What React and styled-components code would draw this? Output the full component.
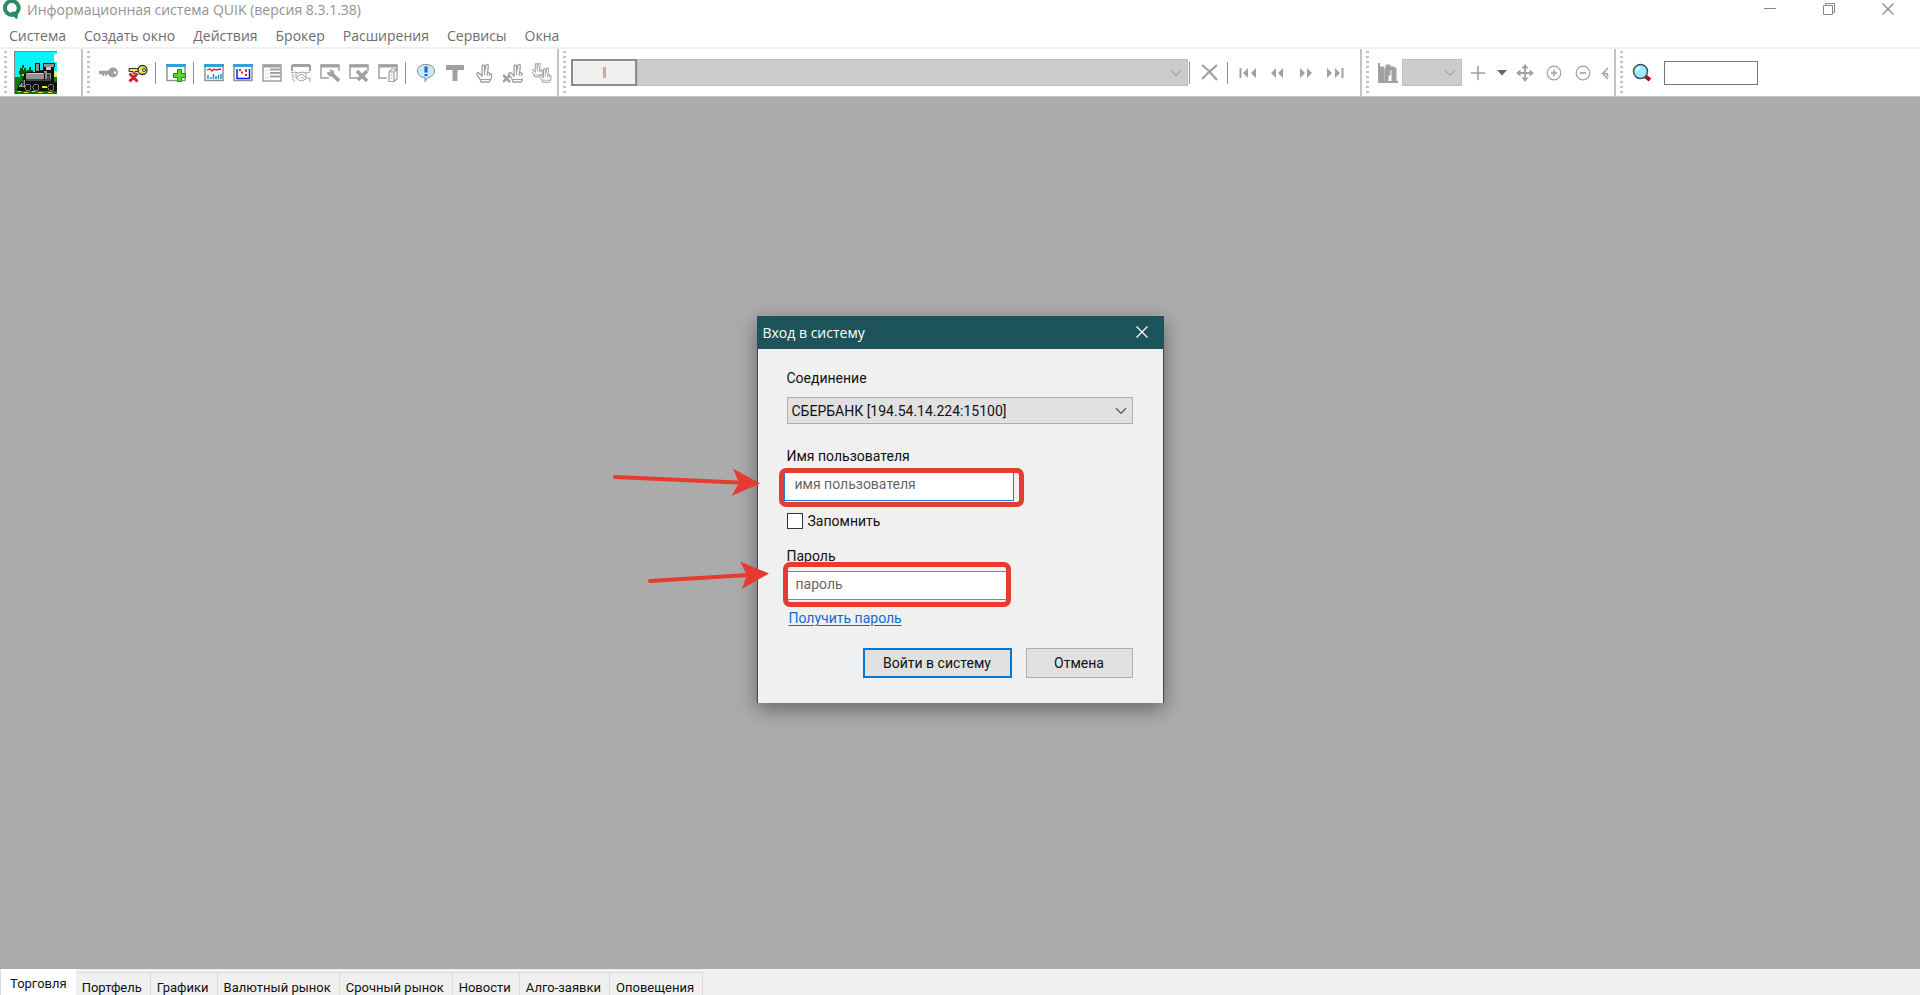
import styled, { createGlobalStyle } from 'styled-components';

const GlobalStyle = createGlobalStyle`
  * {
    box-sizing: border-box;
  }

  body {
    margin: 0;
    overflow: hidden;
    font-family: Roboto, 'Liberation Sans', sans-serif;
    font-size: 14px;
    color: #111;
  }

  button, input, select {
    font: inherit;
    color: inherit;
    margin: 0;
    border-radius: 0;
  }
`;

const StyledApp = styled.div`
  min-height: 100vh;
  display: flex;
  flex-direction: column;
  background: #fff;
`;

const StyledTitleBar = styled.header`
  height: 22px;
  padding: 0 3px 0 2px;
  display: flex;
  align-items: flex-start;
  font-family: 'Open Sans', 'Noto Sans', sans-serif;
  color: #929292;

  h1 {
    flex: 1;
    margin: 0 0 0 6px;
    font-size: 14px;
    font-weight: 400;
    line-height: 20px;
  }
`;

const StyledWindowButton = styled.button`
  width: 59px;
  height: 18px;
  padding: 0;
  border: 0;
  background: none;
  color: ${(props) => props.$color || '#868686'};
  display: flex;
  align-items: center;
  justify-content: center;
`;

const StyledMenu = styled.nav`
  height: 27px;
  padding: 4px 9px 0;
  display: flex;
  gap: 18px;
  border-bottom: 2px solid #f0f0f0;
  font-family: 'Open Sans', 'Noto Sans', sans-serif;
  font-size: 14px;
  line-height: 20px;

  a {
    color: #6d6d6d;
    text-decoration: none;
  }
`;

const StyledToolbars = styled.div`
  height: 48px;
  display: flex;
  border-bottom: 1px solid #c4c4c4;
`;

const StyledToolbar = styled.div`
  width: ${(props) => props.$width || 'auto'};
  padding-left: 4px;
  display: flex;
  align-items: center;
  border-right: ${(props) => (props.$last ? '0' : '2px solid #c3c3c6')};
`;

const StyledGrip = styled.span`
  width: 3px;
  height: 100%;
  margin-right: 4px;
  background: repeating-linear-gradient(#fff 0 2px, #c2c2c2 2px 4px, #fff 4px 5px);
`;

const StyledToolButton = styled.button`
  width: ${(props) => props.$width || '29px'};
  height: 28px;
  padding: 0;
  border: 0;
  background: none;
  color: #a0a0a0;
  display: flex;
  align-items: center;
  justify-content: center;
`;

const StyledSeparator = styled.span`
  width: 1px;
  height: 22px;
  margin: 0 5px 0 ${(props) => (props.$tight ? '1px' : '3px')};
  background: #8f8f8f;
`;

const StyledInstrument = styled.div`
  width: 617px;
  height: 27px;
  margin-left: 1px;
  display: flex;
`;

const StyledInstrumentButton = styled.button`
  width: 66px;
  padding: 0;
  border: 2px solid #8c8c8c;
  background: #f0f0f0;
  color: #e09a48;
  text-shadow: 1px 0 #4faaf2;
  line-height: 20px;
`;

const StyledSelectBox = styled.div`
  flex: ${(props) => (props.$width ? 'none' : '1')};
  width: ${(props) => props.$width || 'auto'};
  height: 27px;
  position: relative;

  select {
    width: 100%;
    height: 100%;
    padding: 0 4px;
    appearance: none;
    border: 1px solid ${(props) => (props.$dim ? '#bfbfbf' : '#adadad')};
    background: ${(props) => (props.$dim ? '#ccc' : '#e1e1e1')};
    opacity: 1;
  }

  svg {
    position: absolute;
    top: 10px;
    right: 6px;
    color: ${(props) => (props.$dim ? '#a8a8a8' : '#666')};
    pointer-events: none;
  }
`;

const StyledSearchInput = styled.input`
  width: 94px;
  height: 24px;
  margin-left: 8px;
  border: 1px solid #777;
  background: #fff;
  outline: 0;
`;

const StyledWorkspace = styled.main`
  flex: 1;
  padding-bottom: 47px;
  display: flex;
  align-items: center;
  justify-content: center;
  background: #ababab;
`;

const StyledDialog = styled.section`
  width: 407px;
  position: relative;
  border: 1px solid #1d545c;
  border-bottom: 0;
  background: #f0f0f0;
  box-shadow: 0 6px 18px rgba(0, 0, 0, 0.4);
`;

const StyledDialogHeader = styled.div`
  height: 32px;
  padding: 0 0 2px 5px;
  display: flex;
  align-items: center;
  justify-content: space-between;
  background: #1d545c;
  color: #fff;

  h2 {
    margin: 0;
    font-family: 'Open Sans', 'Noto Sans', sans-serif;
    font-size: 14px;
    font-weight: 400;
  }

  button {
    width: 41px;
  }
`;

const StyledForm = styled.form`
  padding: 20px 30px 25px 29px;
  display: flex;
  flex-direction: column;
  align-items: flex-start;
  line-height: 18px;
`;

const StyledLabel = styled.label`
  margin-bottom: ${(props) => props.$gap || '0'};
`;

const StyledConnection = styled.div`
  width: 100%;
  margin-bottom: 23px;
  display: flex;
`;

const StyledHighlight = styled.div`
  width: ${(props) => props.$width};
  height: ${(props) => props.$height};
  margin-left: ${(props) => props.$shift};
  border: 5px solid #e63b30;
  border-radius: 7px;
  position: relative;
  color: #666;

  input {
    width: ${(props) => props.$inputWidth};
    height: 28px;
    padding: 0 10px 6px;
    display: block;
    outline: 0;
    background: #fff;
    border: solid #1a7fd6;
    border-width: 0 1px 1px;
  }

  input::placeholder {
    color: #666;
    opacity: 1;
  }
`;

const StyledPasswordHighlight = styled(StyledHighlight)`
  margin-top: -3px;
  padding-top: 4px;

  input {
    height: 29px;
    padding: 0 8px 4px;
    border-color: #858585;
    border-width: 1px 0;
  }
`;

const StyledRemember = styled.label`
  margin: 5px 0 17px;
  display: flex;
  align-items: center;
  gap: 5px;

  input {
    width: 16px;
    height: 16px;
    appearance: none;
    border: 1px solid #333;
    background: #fff;
  }
`;

const StyledPasswordLink = styled.a`
  margin: 2px 0 21px 2px;
  color: #0f6bd0;
  text-underline-offset: 2px;
`;

const StyledActions = styled.div`
  align-self: flex-end;
  display: flex;
  gap: 14px;
`;

const StyledButton = styled.button`
  width: ${(props) => props.$width};
  height: 30px;
  padding: 0;
  background: #e1e1e1;
  border: ${(props) => (props.$primary ? '2px solid #0078d7' : '1px solid #adadad')};
`;

const StyledArrows = styled.svg`
  position: absolute;
  left: -148px;
  top: 144px;
  pointer-events: none;
`;

const StyledTabs = styled.div`
  height: 26px;
  display: flex;
  align-items: flex-end;
  background: #f0f0f0;
  font-size: 13px;
`;

const StyledTab = styled.button`
  height: ${(props) => (props.$active ? '26px' : '23px')};
  padding: ${(props) => (props.$active ? '3px 9px 0 9px' : '6px 8px 0 6px')};
  border: solid #dcdcdc;
  border-width: ${(props) => (props.$active ? '0 0 0 1px' : '1px 1px 0 0')};
  background: ${(props) => (props.$active ? '#fff' : '#f0f0f0')};
  white-space: nowrap;
`;

const menuItems = ['Система', 'Создать окно', 'Действия', 'Брокер', 'Расширения', 'Сервисы', 'Окна'];

const tabs = [
  'Торговля',
  'Портфель',
  'Графики',
  'Валютный рынок',
  'Срочный рынок',
  'Новости',
  'Алго-заявки',
  'Оповещения',
];

const Icon = ({ children, size = 20 }) => (
  <svg width={size} height={size} viewBox="0 0 20 20" fill="none" stroke="currentColor" aria-hidden="true">
    {children}
  </svg>
);

const Chevron = () => (
  <svg width="12" height="8" viewBox="0 0 12 8" fill="none" stroke="currentColor" strokeWidth="1.6" aria-hidden="true">
    <path d="M1 1.2 6 6.2 11 1.2" />
  </svg>
);

const Cross = () => (
  <svg width="12" height="12" viewBox="0 0 12 12" stroke="currentColor" strokeWidth="1.2" aria-hidden="true">
    <path d="M.5.5l11 11M11.5.5l-11 11" />
  </svg>
);

const Logo = () => (
  <svg width="19" height="20" viewBox="0 0 19 20" aria-hidden="true">
    <circle cx="9.8" cy="8" r="6.9" fill="none" stroke="#2c8a67" strokeWidth="4" />
    <path d="M8 13h8l-.4 5.8h-1.8z" fill="#2c8a67" />
    <path d="M8.6 12.2l3.2-1 1.6 3z" fill="#2c8a67" />
  </svg>
);

const Locomotive = () => (
  <svg width="43" height="43" viewBox="0 0 43 43" shapeRendering="crispEdges" aria-hidden="true">
    <path fill="#00f6f6" d="M0 0h43v43H0z" />
    <path fill="#fff" d="M40 3h3v8h-3z" />
    <path fill="#e8e878" d="M40 20h3v6h-3z" />
    <path fill="#008000" d="M0 26h6v-4h3v4h34v17H0z" />
    <path fill="#00570a" d="M8 14h2v3h2v3h1v3h-3v4H8v-4H5v-3h1v-3h2zM15 16h2v3h2v4h-6v-4h2z" />
    <path fill="#d8c23a" d="M9 17h1v2H9zM8 23h2v2H8z" />
    <path fill="#111" d="M21 12h5v7h3v-7h12v4h-1v15h3v7H4v-3l6-9v-3l3-2h8z" />
    <path fill="#929292" d="M22 13h3v7h-3zM30 13h10v3H30zM12 22h26v6H12zM30 20h3v2h-3zM5 34l6-6v8H5z" />
    <path fill="#c8c8c8" d="M32 16h5v3h-5zM13 22h16v1H13z" />
    <path fill="#444" d="M8 29h2v6H8zM33 23h3v5h-3zM12 28h25v2H12z" />
    <path fill="#111" d="M30 22h1v7h-1zM37 20h1v9h-1zM3 37h40v3H3z" />
    <path fill="#e8e800" d="M3 40h4v1H3zM10 41h4v1h-4zM18 40h3v1h-3zM24 41h5v1h-5zM34 41h4v1h-4zM28 35h5v2h-5z" />
    <g fill="#111" stroke="#7a7a7a">
      <circle cx="14" cy="36.5" r="3" />
      <circle cx="22" cy="36.5" r="3" />
      <circle cx="37" cy="36.5" r="3" />
    </g>
    <path fill="#858585" d="M0 0h43v1H1v42H0z" />
  </svg>
);

const WindowShape = () => (
  <>
    <path d="M1 2h18v16H1z" fill="#fff" strokeWidth="1.5" />
    <path d="M1 3h18" strokeWidth="3" />
  </>
);

const OpenWindowShape = () => (
  <>
    <path d="M9 15H1V2h18v6" strokeWidth="1.5" />
    <path d="M1 3h18" strokeWidth="3" />
  </>
);

const BlueWindow = ({ children }) => (
  <Icon>
    <path d="M1 2h18v15.5H1z" fill="#fff" stroke="#929292" strokeWidth="1.5" />
    <path d="M0 2.5h20" stroke="#35a0d2" strokeWidth="3" />
    {children}
  </Icon>
);

// two raised fingers over a closed palm
const HandShape = () => (
  <>
    <path
      d="M7 19l-1-3-3-4c-1-2 1-3 2.5-1.5L8 13V3.5c0-2 2.5-2 2.5 0V9L12 2.5c.4-1.8 2.6-1.3 2.4.5L13.5 10c1-1 2.5 0 2.2 1 1-.6 2.3.2 2 1.5L17 16l-2 3z"
      fill="#fff"
      strokeWidth="1.3"
    />
    <path d="M10.5 9v3M13.5 10l-.5 3M15.7 11l-.5 2M7 16.5h9" />
  </>
);

const icons = {
  connect: (
    <Icon>
      <path d="M0 9.5h10M3 11h2M6 11h2" strokeWidth="3.5" />
      <circle cx="14" cy="9.5" r="5" fill="currentColor" stroke="none" />
      <circle cx="16" cy="9.5" r="1.2" fill="#fff" stroke="none" />
    </Icon>
  ),
  disconnect: (
    <Icon>
      <path d="M1 5.5h10v3H7v2H5v-2H1z" fill="#f2e54a" stroke="#333" />
      <circle cx="14.5" cy="7" r="4.5" fill="#f2e54a" stroke="#333" strokeWidth="1.3" />
      <circle cx="16" cy="7" r="1.5" fill="#fff" stroke="#333" />
      <path d="M1.5 10.5l8 8M9.5 10.5l-8 8" stroke="#cc2233" strokeWidth="3" />
    </Icon>
  ),
  create: (
    <BlueWindow>
      <path d="M11.5 6.5h4v4h4v4h-4v4h-4v-4h-4v-4h4z" fill="#55d81d" stroke="#18891a" />
    </BlueWindow>
  ),
  chart: (
    <BlueWindow>
      <path d="M3 7l3-1 2 2 2-2 2 1 5-1" stroke="#cf2027" strokeWidth="1.3" />
      <path d="M4 16v-4M7 16v-2M9.5 16v-5M12 16v-3M14.5 16v-4M17 16v-5" stroke="#1787d0" strokeWidth="1.4" />
    </BlueWindow>
  ),
  scatter: (
    <BlueWindow>
      <path d="M4 6v9.5h12.5V6" stroke="#1818f4" strokeWidth="1.5" />
      <path d="M6 7h2M8 9.5h2M13 6v3M12 12h2" stroke="#e0202c" strokeWidth="1.8" />
    </BlueWindow>
  ),
  table: (
    <Icon>
      <WindowShape />
      <path d="M8 6.5h11M8 10h11M8 13.5h11" strokeWidth="2" />
      <path d="M3 7.5h4M3 11h4M3 14.5h4" stroke="#ddd" />
    </Icon>
  ),
  deals: (
    <Icon>
      <path d="M1 8V3h18v5" strokeWidth="2" />
      <path d="M1 2.5h18" strokeWidth="3" />
      <path d="M0 10l4-1 3 1 4-1 4 1 4-1M1 16l3 2M5 10v5l3-3 3-1 4 4-1 2-3-3M5 15l4 3 2-1 2 1M15 10v5M16 15h3v4M2 11v4" />
    </Icon>
  ),
  settings: (
    <Icon>
      <OpenWindowShape />
      <path d="M10 9l9 9" strokeWidth="3.5" />
      <path d="M8 9c0 3 2 4 4 3l1-3-3-2" strokeWidth="2" />
    </Icon>
  ),
  close: (
    <Icon>
      <OpenWindowShape />
      <path d="M8 8l10 10M18 8L9 17" strokeWidth="3.5" />
    </Icon>
  ),
  copy: (
    <Icon>
      <OpenWindowShape />
      <path d="M11 9l3-3h5v10l-3 2.5h-5zM11 9h5v9M16 9l3-3M12.5 12h2M12.5 15h2" fill="#fff" strokeWidth="1.2" />
    </Icon>
  ),
  message: (
    <Icon>
      <path
        d="M10 1.5c5 0 8.5 2.8 8.5 6.5 0 3.5-3 6-6.5 6.5l-3 4v-4C4.5 14.5 1.5 12 1.5 8S5 1.5 10 1.5z"
        fill="#c6ebff"
        stroke="#888"
      />
      <path d="M10 3.5v6M10 11v2" stroke="#1265b8" strokeWidth="3" />
    </Icon>
  ),
  text: <Icon><path d="M1 4.5h18M10 4v14" strokeWidth="5" /></Icon>,
  order: <Icon><HandShape /></Icon>,
  cancelOrder: (
    <Icon>
      <g transform="translate(3 0)"><HandShape /></g>
      <path d="M0 12l7 7M7 12l-7 7" strokeWidth="2.5" />
    </Icon>
  ),
  cancelAll: (
    <Icon>
      <g transform="translate(-3 -1) scale(.78 .78)"><HandShape /></g>
      <g transform="translate(5 4) scale(.8 .8)"><HandShape /></g>
    </Icon>
  ),
  remove: <Icon><path d="M2 2l6 5 9 10M17 2L8 10l-6 6" strokeWidth="2.2" /></Icon>,
  first: (
    <Icon>
      <path d="M2.5 5v10" strokeWidth="2" />
      <path d="M10 5v10l-5-5zM18 5v10l-5-5z" fill="currentColor" stroke="none" />
    </Icon>
  ),
  previous: <Icon><path d="M9 5v10l-5-5zM16 5v10l-5-5z" fill="currentColor" stroke="none" /></Icon>,
  next: <Icon><path d="M4 5v10l5-5zM11 5v10l5-5z" fill="currentColor" stroke="none" /></Icon>,
  last: (
    <Icon>
      <path d="M17.5 5v10" strokeWidth="2" />
      <path d="M2 5v10l5-5zM10 5v10l5-5z" fill="currentColor" stroke="none" />
    </Icon>
  ),
  bars: (
    <Icon>
      <path d="M1 0v19h19" strokeWidth="2" />
      <path d="M2 4h4v14H2zM7 6h3v12H7zM8 2h4v10H8zM14 5h4v13h-4zM12 4h4v3h-4z" fill="currentColor" />
    </Icon>
  ),
  plus: <Icon size={16}><path d="M10 1v18M1 10h18" strokeWidth="2" /></Icon>,
  drop: <Icon size={10}><path d="M0 4h20L10 15z" fill="#666" stroke="none" /></Icon>,
  move: (
    <Icon size={18}>
      <path d="M10 3v14M3 10h14" strokeWidth="2" />
      <path d="M10 0l4 5H6zM10 20l4-5H6zM0 10l5-4v8zM20 10l-5-4v8z" fill="currentColor" stroke="none" />
    </Icon>
  ),
  zoomIn: (
    <Icon size={16}>
      <circle cx="10" cy="10" r="8.5" strokeWidth="1.5" />
      <path d="M10 6v8M6 10h8" strokeWidth="2" />
    </Icon>
  ),
  zoomOut: (
    <Icon size={16}>
      <circle cx="10" cy="10" r="8.5" strokeWidth="1.5" />
      <path d="M6 10h8" strokeWidth="2" />
    </Icon>
  ),
  undo: (
    <svg width="8" height="14" viewBox="0 0 8 14" fill="none" stroke="currentColor" strokeWidth="1.5" aria-hidden="true">
      <path d="M7 2L1.5 7.5 7 13M3 7.5h3l1 3" />
    </svg>
  ),
  search: (
    <Icon>
      <path d="M13 13l5 4" stroke="#c40000" strokeWidth="4" />
      <circle cx="8.5" cy="8.5" r="7" fill="#9cecfb" stroke="#37545c" strokeWidth="1.5" />
      <path d="M4 8l4-4" stroke="#e2fbff" strokeWidth="2" />
    </Icon>
  ),
};

const ToolButton = ({ name, label, width }) => (
  <StyledToolButton type="button" aria-label={label} $width={width}>
    {icons[name]}
  </StyledToolButton>
);

const LogoToolbar = () => (
  <StyledToolbar $width="83px">
    <StyledGrip />
    <StyledToolButton type="button" aria-label="QUIK" $width="48px">
      <Locomotive />
    </StyledToolButton>
  </StyledToolbar>
);

const MainToolbar = () => (
  <StyledToolbar $width="476px">
    <StyledGrip />
    <ToolButton name="connect" label="Подключиться" />
    <ToolButton name="disconnect" label="Отключиться" />
    <StyledSeparator />
    <ToolButton name="create" label="Создать окно" />
    <StyledSeparator />
    <ToolButton name="chart" label="График" />
    <ToolButton name="scatter" label="Диаграмма" />
    <ToolButton name="table" label="Таблица" />
    <ToolButton name="deals" label="Сделки" />
    <ToolButton name="settings" label="Настройки" />
    <ToolButton name="close" label="Закрыть окно" />
    <ToolButton name="copy" label="Копировать" />
    <StyledSeparator />
    <ToolButton name="message" label="Сообщения" />
    <ToolButton name="text" label="Текст" />
    <ToolButton name="order" label="Заявка" />
    <ToolButton name="cancelOrder" label="Снять заявку" />
    <ToolButton name="cancelAll" label="Снять все заявки" />
  </StyledToolbar>
);

const HistoryToolbar = () => (
  <StyledToolbar $width="803px">
    <StyledGrip />
    <StyledInstrument>
      <StyledInstrumentButton type="button">I</StyledInstrumentButton>
      <StyledSelectBox $dim>
        <select aria-label="Инструмент" disabled />
        <Chevron />
      </StyledSelectBox>
    </StyledInstrument>
    <StyledSeparator $tight />
    <ToolButton name="remove" label="Удалить" />
    <StyledSeparator />
    <ToolButton name="first" label="В начало" />
    <ToolButton name="previous" label="Назад" />
    <ToolButton name="next" label="Вперёд" />
    <ToolButton name="last" label="В конец" />
  </StyledToolbar>
);

const ChartToolbar = () => (
  <StyledToolbar $width="254px">
    <StyledGrip />
    <ToolButton name="bars" label="Тип графика" />
    <StyledSelectBox $dim $width="60px">
      <select aria-label="Интервал" disabled />
      <Chevron />
    </StyledSelectBox>
    <ToolButton name="plus" label="Курсор" width="32px" />
    <ToolButton name="drop" label="Выбор курсора" width="16px" />
    <ToolButton name="move" label="Переместить" />
    <ToolButton name="zoomIn" label="Увеличить" />
    <ToolButton name="zoomOut" label="Уменьшить" />
    <ToolButton name="undo" label="Назад" width="16px" />
  </StyledToolbar>
);

const LoginDialog = () => (
  <StyledDialog role="dialog" aria-labelledby="login-title">
    <StyledDialogHeader>
      <h2 id="login-title">Вход в систему</h2>
      <StyledWindowButton type="button" aria-label="Закрыть" $color="#fff">
        <Cross />
      </StyledWindowButton>
    </StyledDialogHeader>
    <StyledForm onSubmit={(e) => e.preventDefault()}>
      <StyledLabel htmlFor="connection" $gap="10px">Соединение</StyledLabel>
      <StyledConnection>
        <StyledSelectBox>
          <select id="connection">
            <option>СБЕРБАНК [194.54.14.224:15100]</option>
          </select>
          <Chevron />
        </StyledSelectBox>
      </StyledConnection>
      <StyledLabel htmlFor="username" $gap="3px">Имя пользователя</StyledLabel>
      <StyledHighlight $width="245px" $height="39px" $shift="-8px" $inputWidth="230px">
        <input id="username" type="text" placeholder="имя пользователя" />
      </StyledHighlight>
      <StyledRemember>
        <input type="checkbox" />
        Запомнить
      </StyledRemember>
      <StyledLabel htmlFor="password">Пароль</StyledLabel>
      <StyledPasswordHighlight $width="228px" $height="45px" $shift="-4px" $inputWidth="100%">
        <input id="password" type="password" placeholder="пароль" />
      </StyledPasswordHighlight>
      <StyledPasswordLink href="#password">Получить пароль</StyledPasswordLink>
      <StyledActions>
        <StyledButton type="submit" $primary $width="149px">Войти в систему</StyledButton>
        <StyledButton type="button" $width="107px">Отмена</StyledButton>
      </StyledActions>
    </StyledForm>
    <StyledArrows width="164" height="136" viewBox="610 460 164 136" aria-hidden="true">
      <g stroke="#e63b30" strokeWidth="4" strokeLinecap="round" fill="#e63b30">
        <path d="M615 476l122 5.5M650 580l98-6" />
        <path stroke="none" d="M733 467.5l27 15-28.5 12.5 7.5-13zM740 560.5l29 12-27 15.5 5-14z" />
      </g>
    </StyledArrows>
  </StyledDialog>
);

const App = () => {
  return (
    <StyledApp>
      <GlobalStyle />
      <StyledTitleBar>
        <Logo />
        <h1>Информационная система QUIK (версия 8.3.1.38)</h1>
        <StyledWindowButton type="button" aria-label="Свернуть">
          <svg width="12" height="12" stroke="currentColor"><path d="M0 5.5h12" /></svg>
        </StyledWindowButton>
        <StyledWindowButton type="button" aria-label="Восстановить">
          <svg width="12" height="12" fill="none" stroke="currentColor">
            <path d="M.5 2.5h9v9h-9zM2.5 2.5v-2h9v9h-2" />
          </svg>
        </StyledWindowButton>
        <StyledWindowButton type="button" aria-label="Закрыть">
          <Cross />
        </StyledWindowButton>
      </StyledTitleBar>
      <StyledMenu>
        {menuItems.map((item) => (
          <a href="#menu" key={item}>{item}</a>
        ))}
      </StyledMenu>
      <StyledToolbars>
        <LogoToolbar />
        <MainToolbar />
        <HistoryToolbar />
        <ChartToolbar />
        <StyledToolbar $last>
          <StyledGrip />
          <ToolButton name="search" label="Найти" />
          <StyledSearchInput type="text" aria-label="Поиск" />
        </StyledToolbar>
      </StyledToolbars>
      <StyledWorkspace>
        <LoginDialog />
      </StyledWorkspace>
      <StyledTabs role="tablist">
        {tabs.map((tab, index) => (
          <StyledTab type="button" role="tab" key={tab} $active={index === 0} aria-selected={index === 0}>
            {tab}
          </StyledTab>
        ))}
      </StyledTabs>
    </StyledApp>
  );
};

export default App;
